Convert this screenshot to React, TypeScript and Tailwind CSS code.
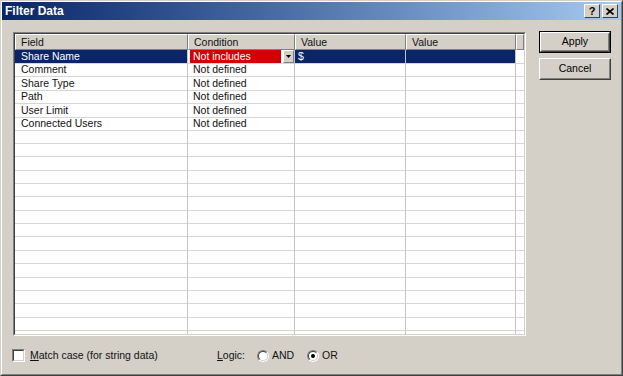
import React from 'react'

const font = { fontFamily: '"Liberation Sans", Arial, sans-serif' }

const rows = [
  ['Share Name', 'Not includes', '$', ''],
  ['Comment', 'Not defined', '', ''],
  ['Share Type', 'Not defined', '', ''],
  ['Path', 'Not defined', '', ''],
  ['User Limit', 'Not defined', '', ''],
  ['Connected Users', 'Not defined', '', ''],
]
while (rows.length < 23) rows.push(['', '', '', ''])

function HeaderCell({ label }: { label: string }) {
  return (
    <div className="h-[16px] bg-[#d4d0c8] border border-t-white border-l-white border-r-[#808080] border-b-[#808080] pl-[5px] leading-[14px] overflow-hidden whitespace-nowrap">
      {label}
    </div>
  )
}

function Btn({ label, def }: { label: string; def?: boolean }) {
  return (
    <div className={def ? 'w-[72px] h-[22px] border border-black' : 'w-[72px] h-[22px]'}>
      <div className="h-full border border-t-white border-l-white border-r-[#404040] border-b-[#404040]">
        <div className="h-full border border-t-[#d4d0c8] border-l-[#d4d0c8] border-r-[#808080] border-b-[#808080] flex items-center justify-center text-black">
          {label}
        </div>
      </div>
    </div>
  )
}

function Radio({ on }: { on?: boolean }) {
  return (
    <div className="w-[12px] h-[12px] rounded-full border border-t-[#808080] border-l-[#808080] border-r-white border-b-white">
      <div className="w-full h-full rounded-full bg-white border border-t-[#404040] border-l-[#404040] border-r-[#d4d0c8] border-b-[#d4d0c8] flex items-center justify-center">
        {on && <div className="w-[4px] h-[4px] rounded-full bg-black" />}
      </div>
    </div>
  )
}

export default function App() {
  return (
    <div style={font} className="w-[623px] h-[376px] text-[10.5px] text-[#111] bg-[#d4d0c8] border border-t-[#d4d0c8] border-l-[#d4d0c8] border-r-[#404040] border-b-[#404040] overflow-hidden">
      <div className="h-full flex flex-col border border-t-white border-l-white border-r-[#808080] border-b-[#808080]">
        {/* title bar */}
        <div className="h-[18px] flex items-center justify-between pl-[3px] pr-[3px] bg-gradient-to-r from-[#0a246a] to-[#a6caf0]">
          <span className="text-white font-bold text-[12px]">Filter Data</span>
          <div className="flex gap-[2px]">
            <div className="w-[16px] h-[14px] bg-[#d4d0c8] border border-t-white border-l-white border-r-[#404040] border-b-[#404040] flex items-center justify-center font-bold text-[11px] leading-none text-black">?</div>
            <div className="w-[16px] h-[14px] bg-[#d4d0c8] border border-t-white border-l-white border-r-[#404040] border-b-[#404040] flex items-center justify-center">
              <svg width="8" height="7" viewBox="0 0 8 7">
                <path d="M0.5 0.5 L7.5 6.5 M7.5 0.5 L0.5 6.5" stroke="black" strokeWidth="1.6" />
              </svg>
            </div>
          </div>
        </div>

        {/* body */}
        <div className="flex gap-[13px] pl-[11px] pt-[12px]">
          <div className="w-[513px] h-[304px] border border-t-[#808080] border-l-[#808080] border-r-white border-b-white">
            <div className="h-full border border-t-[#404040] border-l-[#404040] border-r-[#d4d0c8] border-b-[#d4d0c8] bg-white overflow-hidden">
              <div className="grid grid-cols-[173px_107px_111px_110px_1fr]">
                <HeaderCell label="Field" />
                <HeaderCell label="Condition" />
                <HeaderCell label="Value" />
                <HeaderCell label="Value" />
                <HeaderCell label="" />
              </div>
              {rows.map((r, i) => {
                const sel = i === 0
                return (
                  <div key={i} className="grid grid-cols-[173px_107px_111px_110px_1fr] h-[13.4px]">
                    <div className={`border-r border-r-[#c4c4c4] border-b border-b-[#d6d6d6] pl-[6px] leading-[13px] whitespace-nowrap ${sel ? 'bg-[#0a246a] text-white' : ''}`}>{r[0]}</div>
                    {sel ? (
                      <div className="flex border-r border-r-[#c4c4c4] border-b border-b-[#d6d6d6] pl-[2px]">
                        <div className="flex-1 bg-[#d40000] text-white pl-[3px] leading-[13px]">{r[1]}</div>
                        <div className="w-[11px] ml-[2px] bg-[#d4d0c8] border border-t-white border-l-white border-r-[#808080] border-b-[#808080] flex items-center justify-center">
                          <svg width="5" height="3" viewBox="0 0 5 3"><path d="M0 0 H5 L2.5 3 Z" fill="black" /></svg>
                        </div>
                      </div>
                    ) : (
                      <div className="border-r border-r-[#c4c4c4] border-b border-b-[#d6d6d6] pl-[5px] leading-[13px] whitespace-nowrap">{r[1]}</div>
                    )}
                    <div className={`border-r border-r-[#c4c4c4] border-b border-b-[#d6d6d6] pl-[3px] leading-[13px] ${sel ? 'bg-[#0a246a] text-white' : ''}`}>{r[2]}</div>
                    <div className={`border-r border-r-[#c4c4c4] border-b border-b-[#d6d6d6] pl-[3px] leading-[13px] ${sel ? 'bg-[#0a246a] text-white' : ''}`}>{r[3]}</div>
                    <div className="border-b border-b-[#d6d6d6]" />
                  </div>
                )
              })}
            </div>
          </div>

          <div className="flex flex-col gap-[5px] -mt-[1px]">
            <Btn label="Apply" def />
            <Btn label="Cancel" />
          </div>
        </div>

        {/* bottom options */}
        <div className="flex items-center mt-[13px] pl-[10px] h-[13px]">
          <div className="w-[205px] flex items-center gap-[5px]">
            <div className="w-[13px] h-[13px] border border-t-[#808080] border-l-[#808080] border-r-white border-b-white">
              <div className="w-full h-full bg-white border border-t-[#404040] border-l-[#404040] border-r-[#d4d0c8] border-b-[#d4d0c8]" />
            </div>
            <span><u>M</u>atch case (for string data)</span>
          </div>
          <span className="w-[40px]"><u>L</u>ogic:</span>
          <Radio />
          <span className="ml-[3px] w-[35px]">AND</span>
          <Radio on />
          <span className="ml-[3px]">OR</span>
        </div>
      </div>
    </div>
  )
}
